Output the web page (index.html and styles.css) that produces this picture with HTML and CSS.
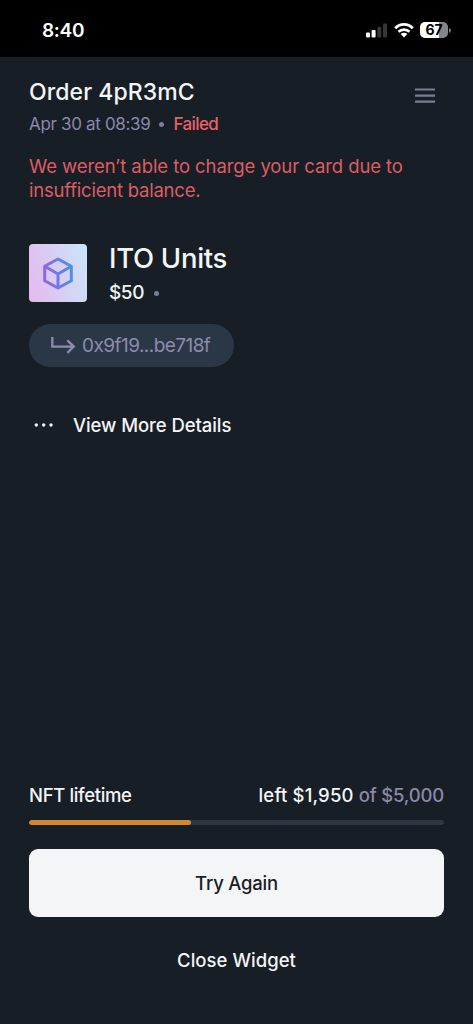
FILE: index.html
```html
<!DOCTYPE html>
<html lang="en">
<head>
<meta charset="utf-8">
<meta name="viewport" content="width=device-width, initial-scale=1">
<title>Order 4pR3mC</title>
<link rel="stylesheet" href="styles.css">
</head>
<body>
<div class="screen">
  <div class="status-bar">
    <span class="clock">8:40</span>
    <div class="status-icons">
      <svg class="signal" width="21" height="15" viewBox="0 0 21 15">
        <rect x="0" y="9.5" width="4" height="5" rx="1" fill="#fff"/>
        <rect x="5.6" y="7" width="4" height="7.5" rx="1" fill="#fff"/>
        <rect x="11.3" y="3.7" width="4" height="10.8" rx="1" fill="#363636"/>
        <rect x="17" y="0.6" width="4" height="13.9" rx="1" fill="#363636"/>
      </svg>
      <svg class="wifi" width="20" height="15" viewBox="0 0 20 15">
        <g fill="none" stroke="#fff" stroke-width="2.7">
          <path d="M1.2 5.2C6.2 .2 13.8 .2 18.8 5.2"/>
          <path d="M4.5 8.8C7.7 5.9 12.3 5.9 15.5 8.8"/>
        </g>
        <path fill="#fff" d="M6.6 11.1C8.6 9.4 11.4 9.4 13.4 11.1L10 14.6Z"/>
      </svg>
      <div class="battery"><span class="battery-level">67</span></div>
      <svg class="battery-cap" width="2" height="5" viewBox="0 0 2 5"><path fill="#7b7b7b" d="M0 0Q2 .8 2 2.5T0 5Z"/></svg>
    </div>
  </div>

  <main class="widget">
    <header class="order-head">
      <div>
        <h1 class="order-title">Order 4pR3mC</h1>
        <div class="order-meta"><span class="date">Apr 30 at 08:39</span><i class="dot"></i><span class="failed">Failed</span></div>
      </div>
      <svg class="menu" width="20" height="15" viewBox="0 0 20 15"><path d="M0 1.5H20M0 7.6H20M0 13.7H20" stroke="#7d7b9b" stroke-width="2.2"/></svg>
    </header>
    <p class="error"><span class="error-first">We weren’t able to charge your card due to</span><br><span class="error-second">insufficient balance.</span></p>

    <section class="item">
      <div class="thumb">
        <svg width="30" height="33" viewBox="0 0 30 33">
          <defs><linearGradient id="cube" gradientUnits="userSpaceOnUse" x1="0" y1="20" x2="30" y2="13"><stop offset="0" stop-color="#9262e8"/><stop offset="1" stop-color="#4b93eb"/></linearGradient></defs>
          <path d="M15 2L28.3 9.3V23.7L15 31L1.7 23.7V9.3ZM1.7 9.3L15 17L28.3 9.3M15 17V31" fill="none" stroke="url(#cube)" stroke-width="3" stroke-linejoin="round"/>
        </svg>
      </div>
      <div class="item-info">
        <h2 class="item-name">ITO Units</h2>
        <div class="item-price"><span class="price">$50</span><i class="dot"></i></div>
      </div>
    </section>

    <div class="address">
      <svg width="25" height="18" viewBox="0 0 25 18"><path d="M1.3 0V9.6H22.6M16.3 3.3L22.8 9.6L16.3 15.8" fill="none" stroke="#8e8bab" stroke-width="2.3"/></svg>
      <span class="hash">0x9f19...be718f</span>
    </div>

    <div class="more">
      <svg width="20" height="4" viewBox="0 0 20 4" fill="#f4f5f7"><circle cx="2.3" cy="2" r="1.7"/><circle cx="9.7" cy="2" r="1.7"/><circle cx="17" cy="2" r="1.7"/></svg>
      <span class="more-text">View More Details</span>
    </div>

    <footer class="footer">
      <div class="limit"><span class="limit-name">NFT lifetime</span><span class="limit-value">left $1,950 <span class="total">of $5,000</span></span></div>
      <div class="track"><div class="fill" style="width:39%"></div></div>
      <button class="primary"><span class="try">Try Again</span></button>
      <button class="plain"><span class="close">Close Widget</span></button>
    </footer>
  </main>
</div>
</body>
</html>
```
FILE: styles.css
```css
* { box-sizing: border-box; }
body { margin: 0; background: #181e25; font-family: Inter, "Liberation Sans", sans-serif; color: #f4f5f7; }
h1, h2, p { margin: 0; font-weight: 500; }
button { border: 0; padding: 0; font: inherit; display: block; width: 100%; }
svg { display: block; flex: none; }
span { white-space: nowrap; }
.screen { height: 1024px; display: flex; flex-direction: column; overflow: hidden; }
.status-bar { height: 57px; background: #000; padding: 15px 22px 0 42px; display: flex; justify-content: space-between; align-items: flex-start; }
.clock { font-size: 19px; line-height: 31px; font-weight: 600; letter-spacing: -.3px; color: #fff; }
.status-icons { display: flex; align-items: center; height: 30px; }
.wifi { margin-left: 7px; }
.battery { margin-left: 6px; width: 28px; height: 16px; border-radius: 5px; background: linear-gradient(90deg, #fff 67%, #858585 67%); text-align: center; }
.battery-level { display: block; font-size: 14px; line-height: 16px; font-weight: 700; color: #000; }
.battery-cap { margin-left: 1px; }
.widget { flex: 1; display: flex; flex-direction: column; padding: 19px 29px 44px; }
.order-head { display: flex; justify-content: space-between; }
.menu { margin: 12px 9.5px 0 0; }
.order-title { font-size: 23px; line-height: 32px; letter-spacing: .08px; }
.order-meta { display: flex; align-items: center; font-size: 17px; line-height: 24px; margin-top: 4px; color: #8b88aa; }
.date { letter-spacing: -.33px; }
.dot { width: 5px; height: 5px; border-radius: 50%; background: #7d7b9b; margin: 0 10px; }
.order-meta .dot { margin: 0 9px; }
.failed { color: #eb6067; letter-spacing: -.6px; font-weight: 500; }
.error { margin-top: 18px; font-size: 18.5px; line-height: 24px; font-weight: 400; color: #de5d64; }
.error-first { letter-spacing: -.08px; }
.error-second { letter-spacing: -.22px; }
.item { display: flex; margin-top: 42px; height: 58px; }
.thumb { width: 58px; height: 58px; border-radius: 4px; background: linear-gradient(75deg, #e4b9ee, #cbe5f8); display: flex; align-items: center; justify-content: center; }
.item-info { margin-left: 22px; }
.item-name { font-size: 27.5px; line-height: 28px; letter-spacing: -.3px; }
.item-price { display: flex; align-items: center; font-size: 19px; line-height: 26px; margin-top: 8px; font-weight: 500; }
.price { letter-spacing: -.4px; }
.address { margin-top: 22px; width: 205px; height: 43px; border-radius: 22px; background: #2a3747; display: flex; align-items: center; padding-left: 22px; color: #8e8bab; font-size: 19px; }
.hash { margin-left: 6px; letter-spacing: -.55px; }
.more { display: flex; align-items: center; margin-top: 46px; height: 24px; padding-left: 5px; font-size: 18.5px; font-weight: 500; }
.more-text { margin-left: 19px; letter-spacing: -.08px; }
.footer { margin-top: auto; }
.limit { display: flex; justify-content: space-between; font-size: 18.5px; line-height: 26px; font-weight: 500; }
.limit-name { letter-spacing: -.36px; }
.limit-value { letter-spacing: .18px; }
.total { color: #8b88aa; letter-spacing: -.2px; }
.track { height: 5px; margin-top: 12px; border-radius: 3px; background: #303541; overflow: hidden; }
.fill { height: 5px; border-radius: 3px; background: #d38631; }
.primary { margin-top: 24px; height: 68px; border-radius: 9px; background: #f4f5f7; color: #181e25; font-size: 18.5px; font-weight: 500; }
.try { letter-spacing: -.22px; }
.plain { margin-top: 23px; height: 40px; background: none; color: #f4f5f7; font-size: 18.5px; font-weight: 500; }
.close { letter-spacing: .04px; }
```
